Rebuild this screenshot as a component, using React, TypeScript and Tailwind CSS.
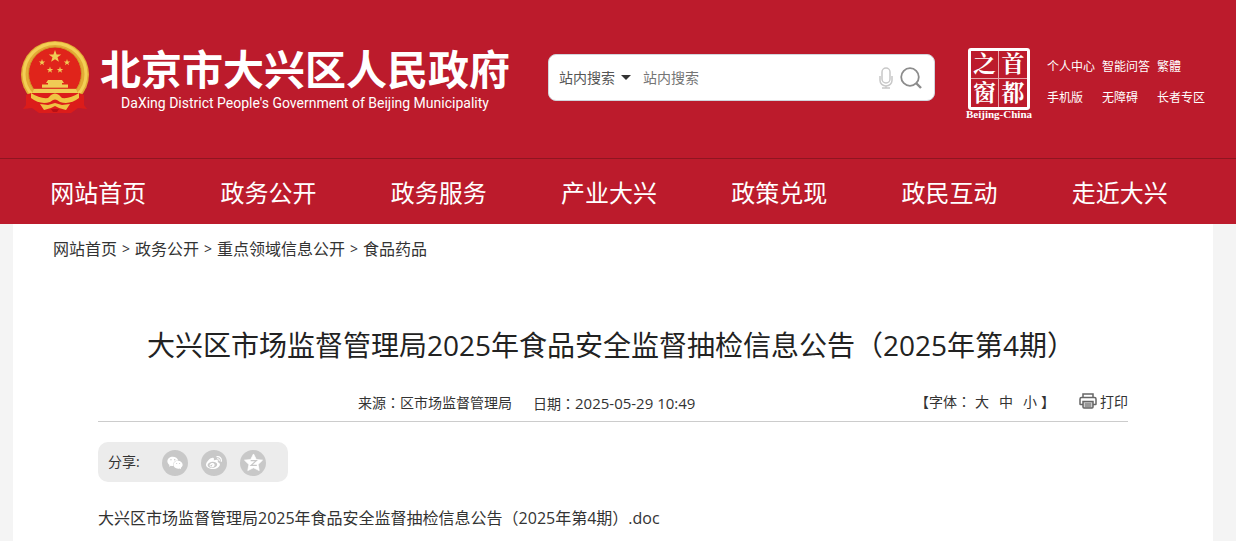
import { FaWeibo, FaWeixin } from 'react-icons/fa';

const navItems = ['网站首页', '政务公开', '政务服务', '产业大兴', '政策兑现', '政民互动', '走近大兴'];
const quickLinks = ['个人中心', '智能问答', '繁體', '手机版', '无障碍', '长者专区'];
const crumbs = ['网站首页', '政务公开', '重点领域信息公开', '食品药品'];
const noticeTitle = '大兴区市场监督管理局2025年食品安全监督抽检信息公告（2025年第4期）';

const STAR = 'M0 -10 L2.4 -3.2 9.5 -3.1 3.8 1.2 5.9 8.1 0 4 -5.9 8.1 -3.8 1.2 -9.5 -3.1 -2.4 -3.2Z';
const FAT_STAR = 'M0 -9.500L3 -3.600 9.500 -3 4.800 1.600 6 8 0 5 -6 8 -4.800 1.600 -9.500 -3 -3 -3.600Z';

function Emblem() {
  return (
    <svg className="w-[70px] h-[74px] shrink-0" viewBox="0 0 70 74" aria-hidden="true">
      <ellipse cx="35" cy="34.500" rx="34" ry="33.500" fill="#e3ab36" />
      <ellipse cx="35" cy="34" rx="31" ry="30.500" fill="none" stroke="#f3cf55" strokeWidth="3" />
      <circle cx="35" cy="33.500" r="26.500" fill="#e0241b" stroke="#d19a2b" />
      <g fill="#f0cb55">
        <path d={STAR} transform="translate(35 16.500) scale(.66)" />
        <path d={STAR} transform="translate(22 22.500) scale(.34)" />
        <path d={STAR} transform="translate(47 22.500) scale(.34)" />
        <path d={STAR} transform="translate(30 30) scale(.34)" />
        <path d={STAR} transform="translate(40 30) scale(.34)" />
        <path d="M28 40h14l2 3h-2v1.500h6V48H22v-3.500h6V43h-2zM14 48.500h42l1.500 4.500h-45z" />
      </g>
      <path d="M14 48.200h42" stroke="#d8281c" />
      <path d="M11 53h48l5 2v10l3 4-9-1-7 5H19l-7-5-9 1 3-4V55z" fill="#dc1c1a" />
      <path d="M11 53q9 6 17 5l3-3q4-3 8 0l3 3q8 1 17-5v5q-9 7-19 4l-3-2q-2-1-4 0l-3 2q-10 3-19-4z" fill="#f0c444" />
      <path d="M20 64l8 1 7-2 7 2 8-1-4 6-7-2-4-2-4 2-7 2z" fill="#efc143" />
      <path d="M31 69h8l-2 3h-4z" fill="#b81016" />
    </svg>
  );
}

function CapitalWindow() {
  const cell = 'flex items-center justify-center border-[#e9a5ab]';
  return (
    <a href="#" className="flex w-[70px] shrink-0 flex-col items-center text-white">
      <span className="grid size-[62px] grid-cols-2 grid-rows-2 rounded-[3px] border-[3px] border-white font-['Liberation_Serif','Noto_Serif_CJK_SC','Noto_Sans_CJK_SC',serif] text-[23px] leading-none font-bold">
        <span className={`${cell} border-r border-b`}>之</span>
        <span className={`${cell} border-b`}>首</span>
        <span className={`${cell} border-r`}>窗</span>
        <span className={cell}>都</span>
      </span>
      <span className="font-['Liberation_Serif',serif] text-[11px] leading-[8px] font-bold">Beijing-China</span>
    </a>
  );
}

function SearchBar() {
  return (
    <form className="flex h-[47px] w-[387px] shrink-0 items-center rounded-lg border border-gray-300 bg-white pr-3 pl-[10px] text-[14px] text-[#555]">
      <button type="button" className="flex items-center gap-[6px]">
        站内搜索
        <span className="border-x-5 border-t-5 border-x-transparent border-t-[#333]" />
      </button>
      <input
        type="text"
        aria-label="站内搜索"
        placeholder="站内搜索"
        className="ml-3 min-w-0 flex-1 outline-none placeholder:text-[#757575]"
      />
      <button type="button" aria-label="语音搜索">
        <svg className="h-[22px] w-[14px]" viewBox="0 0 14 22" fill="none" stroke="#c8c8c8" strokeWidth="1.500">
          <rect x="3" y="1" width="8" height="15" rx="4" />
          <path d="M1 9v4.500a6 5.500 0 0 0 12 0V9M7 18.500V21M3 21h8" />
        </svg>
      </button>
      <button type="submit" aria-label="搜索" className="ml-[7px]">
        <svg className="size-[22px]" viewBox="0 0 22 22" fill="none" stroke="#8c8c8c" strokeWidth="1.800">
          <circle cx="10" cy="10" r="8.800" />
          <path d="M16 16l5 5" strokeWidth="2.400" />
        </svg>
      </button>
    </form>
  );
}

function PrinterIcon() {
  return (
    <svg className="h-[16px] w-[18px]" viewBox="0 0 18 16" fill="none" stroke="#666" strokeWidth="1.500" aria-hidden="true">
      <path d="M4 4.500V1h10v3.500M4 11.500H1.500Q1 11.500 1 11V6q0-1.500 1.500-1.500h13Q17 4.500 17 6v5q0 .500-.500.500H14" />
      <path d="M4 8.500h10v5.500q0 1-1 1H5q-1 0-1-1z" fill="#ccc" />
      <path d="M6 11h6M6 13h6" strokeWidth="1" />
    </svg>
  );
}

function QzoneIcon() {
  return (
    <svg className="size-[19px]" viewBox="-10 -10.500 20 20" aria-hidden="true">
      <path d={FAT_STAR} fill="#fff" stroke="#fff" strokeWidth=".8" strokeLinejoin="round" />
      <path d="M-3 -2.500H3L-2.500 2.500H3.500" fill="none" stroke="#c8c8c8" strokeWidth="1.300" />
    </svg>
  );
}

// Full-width colon set in the middle of its cell
function Colon() {
  return <span className="font-['Noto_Sans_CJK_TC',sans-serif]">：</span>;
}

export default function App() {
  const shareButton = 'flex size-[26px] items-center justify-center rounded-full bg-[#c8c8c8] text-white';

  return (
    <div className="min-h-screen bg-[#f4f4f4] font-['Open_Sans','Noto_Sans_CJK_SC',sans-serif] text-[#333]">
      <header className="bg-[#bc1b2c] text-white">
        <div className="flex h-[158px] items-start pl-[20px]">
          <a href="#" className="flex w-[528px] shrink-0 gap-[10px] pt-10">
            <Emblem />
            <span className="flex flex-col">
              <span className="font-['Noto_Sans_CJK_SC',sans-serif] text-[41px] leading-[55px] font-bold whitespace-nowrap">北京市大兴区人民政府</span>
              <span className="text-center font-['Roboto',sans-serif] text-[14px] leading-4 whitespace-nowrap">
                DaXing District People's Government of Beijing Municipality
              </span>
            </span>
          </a>
          <div className="pt-[54px]">
            <SearchBar />
          </div>
          <div className="flex items-start pt-12 pl-[29px]">
            <CapitalWindow />
            <ul className="ml-[13px] grid grid-cols-[55px_55px_55px] pt-[3px] text-[12px] leading-[31px] whitespace-nowrap">
              {quickLinks.map((label) => (
                <li key={label}>
                  <a href="#">{label}</a>
                </li>
              ))}
            </ul>
          </div>
        </div>
        <nav className="flex h-[66px] items-center border-t border-[#8f1521] pt-0.5 pr-[31px] pl-[13px] text-2xl">
          {navItems.map((label) => (
            <a key={label} href="#" className="flex-1 text-center whitespace-nowrap">
              {label}
            </a>
          ))}
        </nav>
      </header>

      <main className="mr-[23px] ml-[13px] min-h-[317px] bg-white">
        <div className="flex gap-[5px] pt-[13px] pl-10 text-base leading-6">
          {crumbs.map((label, i) => (
            <span key={label} className="flex gap-[5px]">
              {i > 0 && <span className="text-sm leading-6">&gt;</span>}
              <a href="#">{label}</a>
            </span>
          ))}
        </div>

        <article className="mr-[85px] ml-[85px]">
          <h1 className="pt-[64px] pr-1 text-center text-[28px] leading-10 whitespace-nowrap text-[#222]">{noticeTitle}</h1>

          <div className="mt-[20px] flex h-[37px] items-center border-b border-[#ccc] text-[14px]">
            <div className="flex flex-1 gap-[21px] pl-[260px] whitespace-nowrap">
              <span>来源<Colon />区市场监督管理局</span>
              <span>日期<Colon /><time dateTime="2025-05-29T10:49" className="text-[15px]">2025-05-29 10:49</time></span>
            </div>
            <div className="flex items-center pb-1 whitespace-nowrap">
              <span>【字体<Colon /></span>
              <button type="button" className="ml-1">大</button>
              <button type="button" className="ml-[10px]">中</button>
              <button type="button" className="ml-[10px]">小</button>
              <span className="ml-1">】</span>
              <button type="button" className="ml-[24px] flex items-center gap-[3px]">
                <PrinterIcon />
                打印
              </button>
            </div>
          </div>

          <div className="mt-5 flex h-10 w-[190px] items-center rounded-[10px] bg-[#ececec] pl-[10px] text-[14px]">
            <span className="w-[54px] pb-px">分享:</span>
            <div className="flex gap-[13px] pt-px">
              <button type="button" aria-label="微信" className={shareButton}>
                <FaWeixin className="size-4" />
              </button>
              <button type="button" aria-label="微博" className={shareButton}>
                <FaWeibo className="size-4" />
              </button>
              <button type="button" aria-label="QQ空间" className={shareButton}>
                <QzoneIcon />
              </button>
            </div>
          </div>

          <p className="pt-6 text-base leading-6">
            <a href="#">{noticeTitle}.doc</a>
          </p>
        </article>
      </main>
    </div>
  );
}
